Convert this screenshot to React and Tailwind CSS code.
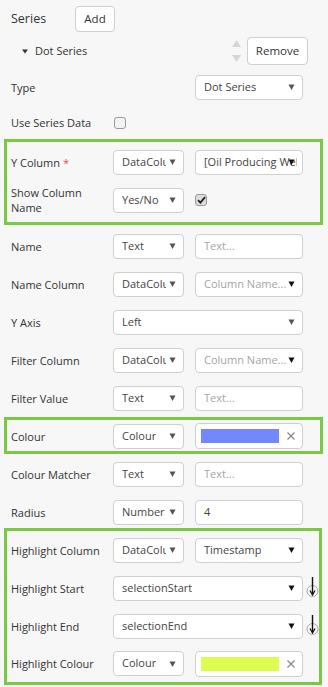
import React from "react";

const GREEN = "border-[#7ac943]";

function Caret({ dark }) {
  return (
    <svg width="7" height="7" viewBox="0 0 7 7" className="absolute top-1/2 -translate-y-1/2 right-[7px]">
      <polygon points="0.5,1 6.5,1 3.5,6.5" fill={dark ? "#111" : "#555"} />
    </svg>
  );
}

function Select({ w, text, dark, placeholder, under }) {
  const pr = under ? "pr-[5px]" : dark ? "pr-[14px]" : "pr-[17px]";
  return (
    <div
      className={`relative ${w} h-[25px] shrink-0 rounded-[4px] border border-[#cfcfcf] bg-white flex items-center pl-[8px] ${pr}`}
    >
      <span
        className={`block min-w-0 whitespace-nowrap overflow-hidden text-[11px] ${placeholder ? "text-[#a5a5a5]" : "text-[#444]"}`}
      >
        {text}
      </span>
      <Caret dark={dark} />
    </div>
  );
}

function Input({ text, placeholder }) {
  return (
    <div className="w-[108px] h-[25px] shrink-0 rounded-[4px] border border-[#cfcfcf] bg-white flex items-center pl-[8px]">
      <span className={`text-[11px] whitespace-nowrap ${placeholder ? "text-[#a5a5a5]" : "text-[#444]"}`}>{text}</span>
    </div>
  );
}

function ColourInput({ swatch }) {
  return (
    <div className="w-[108px] h-[26px] shrink-0 rounded-[4px] border border-[#cfcfcf] bg-white flex items-center pl-[5px] pr-[6px] justify-between">
      <div className={`h-[14px] w-[78px] ${swatch}`} />
      <svg width="10" height="10" viewBox="0 0 10 10">
        <path d="M1.5 1.5 L8.5 8.5 M8.5 1.5 L1.5 8.5" stroke="#8a8a8a" strokeWidth="1.3" />
      </svg>
    </div>
  );
}

function Checkbox({ checked }) {
  return (
    <div
      className={`w-[12px] h-[12px] rounded-[3px] border border-[#9a9a9a] flex items-center justify-center ${checked ? "bg-[#dcdcdc]" : "bg-[#f3f3f3]"}`}
    >
      {checked && (
        <svg width="9" height="8" viewBox="0 0 9 8">
          <path d="M1 4.2 L3.4 6.6 L8 1.2" stroke="#222" strokeWidth="1.8" fill="none" />
        </svg>
      )}
    </div>
  );
}

function PinArrow() {
  return (
    <svg width="13" height="24" viewBox="0 0 13 24" className="ml-[3px] shrink-0">
      <circle cx="6.5" cy="15" r="5.5" fill="none" stroke="#a8a8a8" strokeWidth="1" />
      <path d="M6.5 1 L6.5 18" stroke="#111" strokeWidth="1.4" />
      <path d="M4 14.5 L6.5 19 L9 14.5" stroke="#111" strokeWidth="1.3" fill="none" />
    </svg>
  );
}

function Row({ label, h = "h-[38px]", extra = "", pl = "pl-[11px]", children }) {
  return (
    <div className={`flex items-center ${h} ${pl} ${extra}`}>
      <div className="w-[102px] shrink-0 pr-[7px] text-[11px] leading-[15px] text-[#333]">{label}</div>
      <div className="flex items-center gap-[11px]">{children}</div>
    </div>
  );
}

export default function App() {
  return (
    <div className="w-[328px] h-[687px] bg-[#f7f7f7] overflow-hidden font-['Open_Sans','Noto_Sans',sans-serif]">
      {/* Header */}
      <div className="flex items-center pl-[11px] pt-[6px] pb-[5px]">
        <span className="w-[64px] text-[12.5px] text-[#333]">Series</span>
        <button className="w-[40px] h-[26px] rounded-[4px] border border-[#cfcfcf] bg-white text-[11.5px] text-[#333]">
          Add
        </button>
      </div>

      {/* Dot Series */}
      <div className="flex h-[28px] items-center justify-between pl-[22px] pr-[20px]">
        <div className="flex items-center">
          <svg width="6" height="5" viewBox="0 0 6 5">
            <polygon points="0,0.5 6,0.5 3,4.5" fill="#333" />
          </svg>
          <span className="ml-[7px] text-[11px] text-[#333]">Dot Series</span>
        </div>
        <div className="flex items-center">
          <svg width="9" height="22" viewBox="0 0 9 22" className="mr-[6px]">
            <polygon points="4.5,0 9,7 0,7" fill="#d6d6d6" />
            <polygon points="0,15 9,15 4.5,22" fill="#d6d6d6" />
          </svg>
          <button className="w-[61px] h-[28px] rounded-[4px] border border-[#cfcfcf] bg-white text-[11.5px] text-[#333]">
            Remove
          </button>
        </div>
      </div>

      {/* Type */}
      <Row label="Type" extra="mt-[3px]">
        <div className="ml-[82px]">
          <Select w="w-[108px]" text="Dot Series" />
        </div>
      </Row>

      {/* Use Series Data */}
      <Row label="Use Series Data" h="h-[33px]">
        <div className="ml-[1px]">
          <Checkbox />
        </div>
      </Row>

      {/* Box 1 */}
      <div className={`ml-[4px] mr-[5px] border-[3px] ${GREEN} pt-[1px] pb-[3px]`}>
        <Row
          pl="pl-[4px]"
          label={
            <span>
              Y Column <span className="text-[#e05050]">*</span>
            </span>
          }
        >
          <Select w="w-[71px]" text="DataColumn" />
          <Select w="w-[108px]" text="[Oil Producing Wells]" dark under />
        </Row>
        <Row pl="pl-[4px]" label="Show Column Name">
          <Select w="w-[71px]" text="Yes/No" />
          <Checkbox checked />
        </Row>
      </div>

      <Row label="Name" extra="mt-[2px]">
        <Select w="w-[71px]" text="Text" />
        <Input text="Text..." placeholder />
      </Row>
      <Row label="Name Column">
        <Select w="w-[71px]" text="DataColumn" />
        <Select w="w-[108px]" text="Column Name..." placeholder dark />
      </Row>
      <Row label="Y Axis">
        <Select w="w-[190px]" text="Left" />
      </Row>
      <Row label="Filter Column">
        <Select w="w-[71px]" text="DataColumn" />
        <Select w="w-[108px]" text="Column Name..." placeholder dark />
      </Row>
      <Row label="Filter Value">
        <Select w="w-[71px]" text="Text" />
        <Input text="Text..." placeholder />
      </Row>

      {/* Box 2 */}
      <div className={`ml-[4px] mr-[5px] border-[3px] ${GREEN} pt-[1px]`}>
        <Row pl="pl-[4px]" label="Colour" h="h-[30px]">
          <Select w="w-[71px]" text="Colour" />
          <ColourInput swatch="bg-[#7388fd]" />
        </Row>
      </div>

      <Row label="Colour Matcher" extra="mt-[1px]">
        <Select w="w-[71px]" text="Text" />
        <Input text="Text..." placeholder />
      </Row>
      <Row label="Radius" h="h-[35px]" extra="pt-[3px]">
        <Select w="w-[71px]" text="Number" />
        <Input text="4" />
      </Row>

      {/* Box 3 */}
      <div className={`ml-[4px] mr-[6px] border-[3px] ${GREEN}`}>
        <Row pl="pl-[4px]" label="Highlight Column">
          <Select w="w-[71px]" text="DataColumn" />
          <Select w="w-[108px]" text="Timestamp" dark />
        </Row>
        <Row pl="pl-[4px]" label="Highlight Start">
          <div className="flex items-center">
            <Select w="w-[190px]" text="selectionStart" dark />
            <PinArrow />
          </div>
        </Row>
        <Row pl="pl-[4px]" label="Highlight End">
          <div className="flex items-center">
            <Select w="w-[190px]" text="selectionEnd" dark />
            <PinArrow />
          </div>
        </Row>
        <Row pl="pl-[4px]" label="Highlight Colour" h="h-[37px]">
          <Select w="w-[71px]" text="Colour" />
          <ColourInput swatch="bg-[#dcfd50]" />
        </Row>
      </div>
    </div>
  );
}
